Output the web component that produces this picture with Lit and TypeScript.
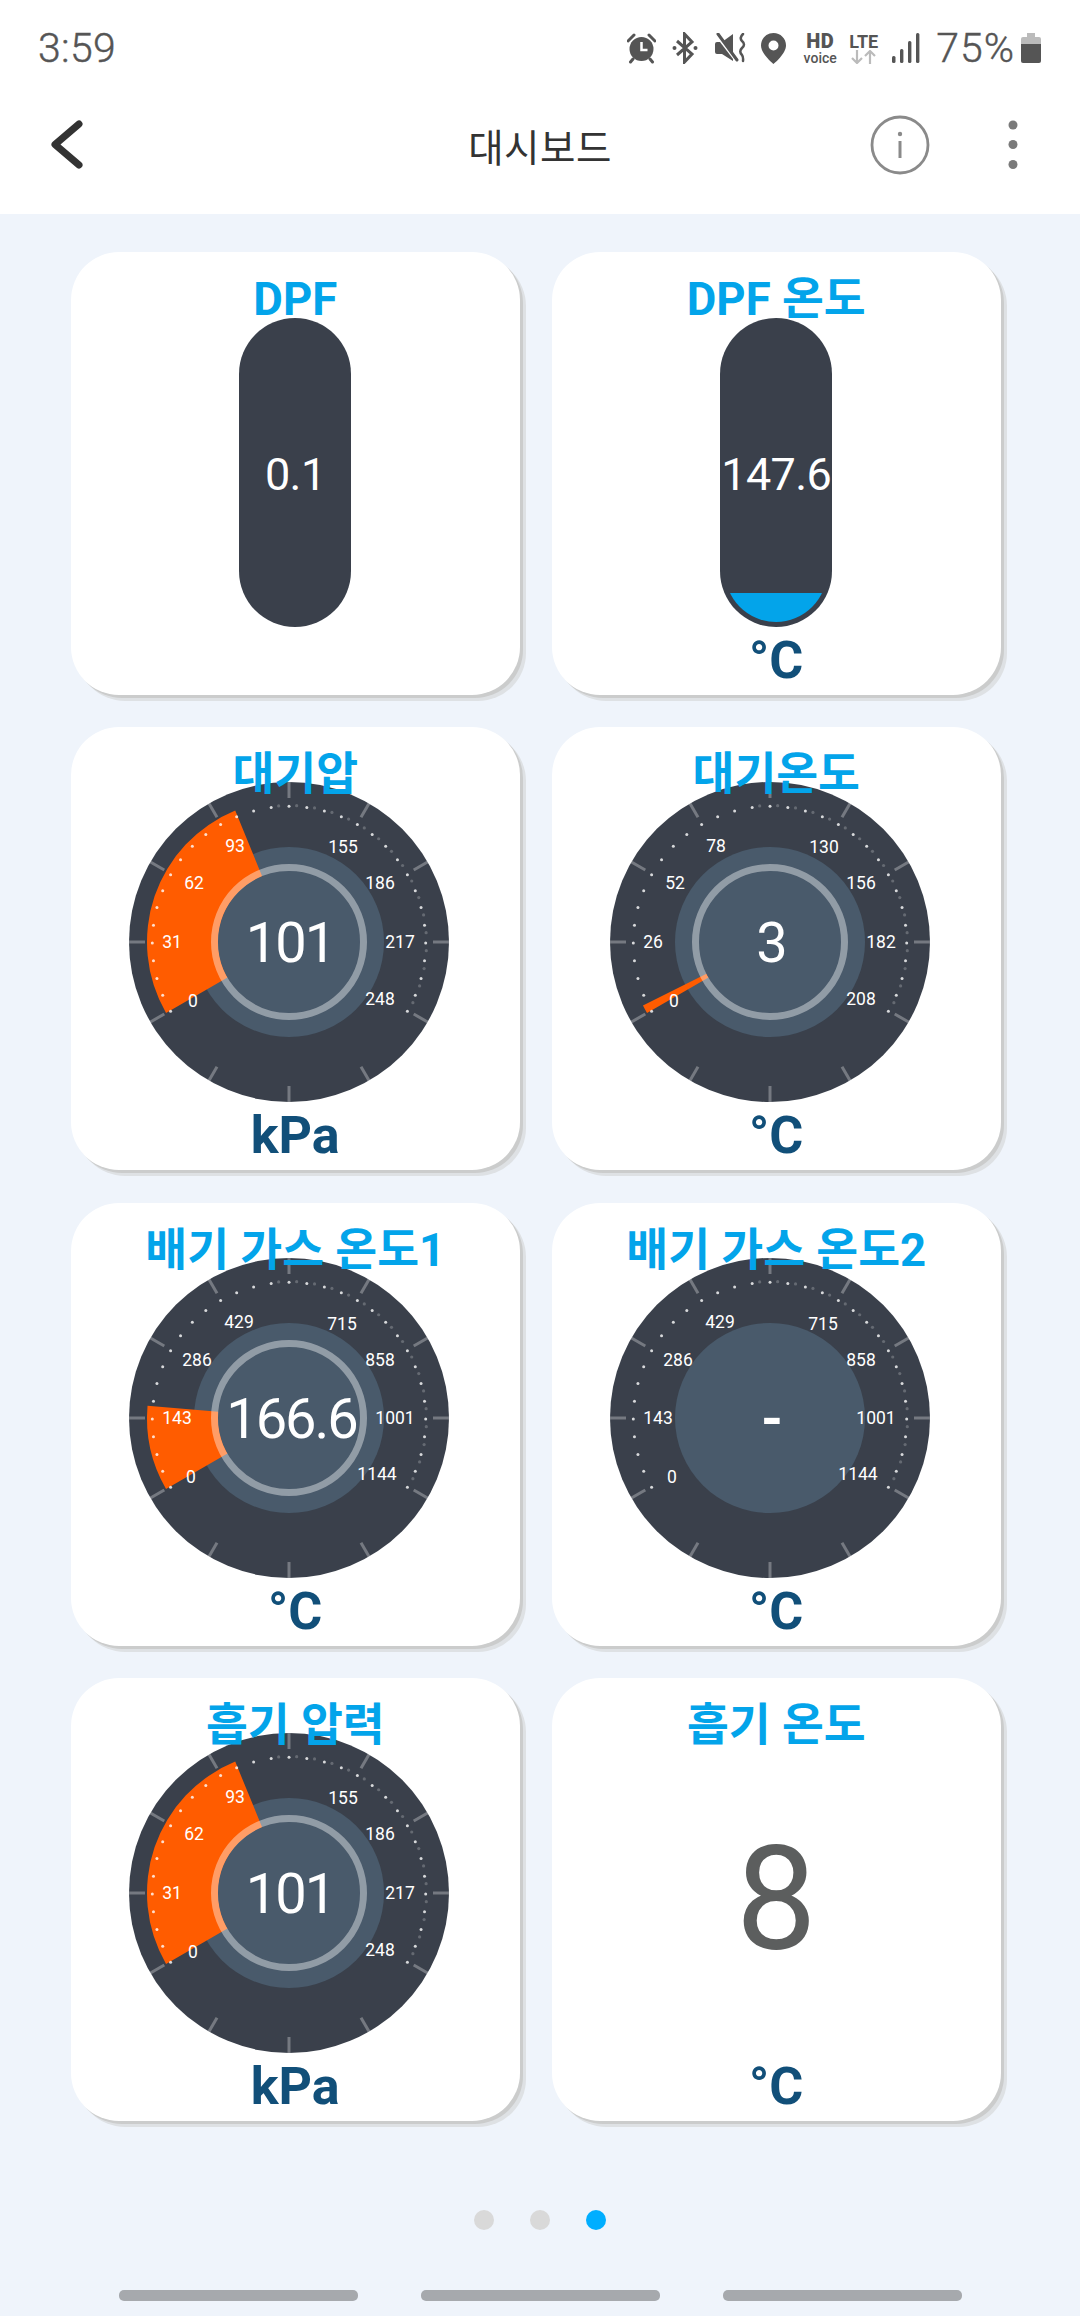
import { LitElement, html, svg, css } from "lit";
import { customElement } from "lit/decorators.js";

interface GaugeCfg {
  title: string;
  unit: string;
  max: number;
  value: number | null;
  display: string;
  labels: string[];
  offsets: number[][];
}

const BASE_OFFSETS = [[-96, 59], [-117, 0], [-95, -59], [-54, -96], [54, -95], [91, -59], [111, 0], [91, 57]];
const EXHAUST_OFFSETS = [[-98, 59], [-112, 0], [-92, -58], [-50, -96], [53, -94], [91, -58], [106, 0], [88, 56]];
const CX = 160;
const CY = 160;

const polar = (r: number, deg: number): [number, number] => {
  const a = (deg * Math.PI) / 180;
  return [CX + r * Math.cos(a), CY - r * Math.sin(a)];
};

const sector = (r0: number, r1: number, from: number, to: number) => {
  const [ax, ay] = polar(r1, from);
  const [bx, by] = polar(r1, to);
  const [cx, cy] = polar(r0, to);
  const [dx, dy] = polar(r0, from);
  const large = from - to > 180 ? 1 : 0;
  return `M${ax} ${ay}A${r1} ${r1} 0 ${large} 1 ${bx} ${by}L${cx} ${cy}A${r0} ${r0} 0 ${large} 0 ${dx} ${dy}Z`;
};

const gauges: Record<string, GaugeCfg> = {
  atm: { title: "대기압", unit: "kPa", max: 248, value: 101, display: "101", labels: ["0", "31", "62", "93", "155", "186", "217", "248"], offsets: BASE_OFFSETS },
  air: { title: "대기온도", unit: "°C", max: 208, value: 3, display: "3", labels: ["0", "26", "52", "78", "130", "156", "182", "208"], offsets: BASE_OFFSETS },
  ex1: { title: "배기 가스 온도1", unit: "°C", max: 1144, value: 166.6, display: "166.6", labels: ["0", "143", "286", "429", "715", "858", "1001", "1144"], offsets: EXHAUST_OFFSETS },
  ex2: { title: "배기 가스 온도2", unit: "°C", max: 1144, value: null, display: "-", labels: ["0", "143", "286", "429", "715", "858", "1001", "1144"], offsets: EXHAUST_OFFSETS },
  intake: { title: "흡기 압력", unit: "kPa", max: 248, value: 101, display: "101", labels: ["0", "31", "62", "93", "155", "186", "217", "248"], offsets: BASE_OFFSETS },
};

@customElement("app-root")
export class AppRoot extends LitElement {
  static styles = css`
    :host {
      display: block;
      width: 1080px;
      height: 2316px;
      background: #eff4fb;
      font-family: Roboto, "Noto Sans CJK KR", sans-serif;
      overflow: hidden;
    }
    .top {
      background: #fff;
      height: 214px;
    }
    .status {
      height: 96px;
      display: flex;
      align-items: center;
      padding: 0 39px 0 38px;
      color: #555;
    }
    .time {
      font-size: 41px;
      font-weight: 300;
      margin-right: auto;
      letter-spacing: 0.3px;
      -webkit-text-stroke: 0.4px #555;
    }
    .ico { display: block; flex: none; }
    .m16 { margin-left: 16px; }
    .m17 { margin-left: 17px; }
    .m15 { margin-left: 15px; }
    .m13 { margin-left: 13px; }
    .m6 { margin-left: 6px; }
    .hd {
      width: 34px;
      margin-left: 17px;
      display: flex;
      flex-direction: column;
      align-items: center;
      gap: 2px;
      font-weight: 700;
      color: #555;
    }
    .hd b { font-size: 20px; line-height: 17px; height: 17px; letter-spacing: 0.5px; }
    .hd i { font-size: 14px; line-height: 12px; height: 12px; font-style: normal; font-weight: 500; }
    .lte {
      width: 31px;
      margin-left: 11px;
      display: flex;
      flex-direction: column;
      align-items: center;
    }
    .lte b { font-size: 18px; line-height: 17px; font-weight: 700; color: #555; }
    .pct {
      margin-left: 16px;
      font-size: 41px;
      font-weight: 300;
      letter-spacing: 1px;
      -webkit-text-stroke: 0.4px #555;
    }
    .appbar {
      height: 98px;
      display: grid;
      grid-template-columns: 1fr auto 1fr;
      align-items: center;
    }
    .back { padding-left: 48px; }
    .page-title {
      font-size: 38.5px;
      color: #333;
      font-weight: 400;
      letter-spacing: 0.5px;
    }
    .actions {
      display: flex;
      justify-content: flex-end;
      align-items: center;
      padding-right: 62px;
      gap: 78px;
    }
    .grid {
      display: grid;
      grid-template-columns: 448.5px 448.5px;
      grid-auto-rows: 443px;
      column-gap: 32.5px;
      row-gap: 32.3px;
      padding: 38px 0 0 71px;
    }
    .card {
      background: #fff;
      border-radius: 48px;
      box-shadow: 3px 3px 0 #cbcccc, 6px 6px 0 #dee1e4;
      display: flex;
      flex-direction: column;
      align-items: center;
      padding-top: 20px;
      box-sizing: border-box;
    }
    .title {
      position: relative;
      z-index: 1;
      font-size: 45.5px;
      line-height: 56px;
      font-weight: 700;
      color: #03a4ea;
      white-space: nowrap;
    }
    .unit {
      margin-top: 3px;
      font-size: 52px;
      line-height: 61px;
      font-weight: 700;
      color: #114f79;
    }
    .gauge {
      display: block;
      margin: -21px 12px 0 0;
      flex: none;
    }
    .lbl {
      fill: #fff;
      font-size: 17.5px;
      text-anchor: middle;
    }
    .val {
      fill: #fff;
      font-size: 56px;
      text-anchor: middle;
      letter-spacing: -2px;
    }
    .val.none { font-weight: 700; }
    .capsule {
      margin-top: -10px;
      width: 112px;
      height: 309px;
      border-radius: 56px;
      background: #3a404b;
      position: relative;
      flex: none;
      display: flex;
      align-items: center;
      justify-content: center;
      padding-top: 3px;
      box-sizing: border-box;
    }
    .tube {
      position: absolute;
      inset: 5px;
      border-radius: 51px;
      overflow: hidden;
      display: flex;
      flex-direction: column;
      justify-content: flex-end;
    }
    .fill { background: #03a4ea; }
    .cap-val {
      position: relative;
      font-size: 45px;
      font-weight: 400;
      letter-spacing: -0.6px;
      color: #fff;
      white-space: nowrap;
    }
    .big {
      height: 299px;
      padding-bottom: 6px;
      box-sizing: border-box;
      display: flex;
      align-items: center;
      font-size: 144px;
      font-weight: 400;
      color: #5c5e5e;
      line-height: 1;
    }
    .pager {
      display: flex;
      justify-content: center;
      gap: 36px;
      margin-top: 89px;
    }
    .dot { width: 20px; height: 20px; border-radius: 50%; background: #d9d9d9; }
    .dot.on { background: #00aeff; }
    .nav {
      display: flex;
      justify-content: center;
      gap: 63px;
      margin-top: 60px;
    }
    .nav span { width: 239px; height: 11px; border-radius: 5px; background: #a6a9ad; }
  `;

  private statusBar() {
    return html`<div class="status">
      <span class="time">3:59</span>
      <svg class="ico" width="29" height="31" viewBox="0 0 29 31">
        <path d="M1 8 7 2M28 8l-6-6" stroke="#555" stroke-width="3" stroke-linecap="round" fill="none"/>
        <path d="M6 26l-2.500 3M23 26l2.500 3" stroke="#555" stroke-width="3" stroke-linecap="round" fill="none"/>
        <circle cx="14.500" cy="16" r="12" fill="#555"/>
        <path d="M14.500 9v8h6" stroke="#fff" stroke-width="2.500" fill="none"/>
      </svg>
      <svg class="ico m16" width="26" height="32" viewBox="0 0 26 32">
        <path d="M5 9 20 22l-7.500 8V2L20 10 5 23" stroke="#555" stroke-width="3" fill="none"/>
        <circle cx="2.500" cy="16" r="2" fill="#555"/>
        <circle cx="23.500" cy="16" r="2" fill="#555"/>
      </svg>
      <svg class="ico m17" width="31" height="30" viewBox="0 0 31 30">
        <path d="M0 11q0-2 2-2h5l11-8v27L7 21H2q-2 0-2-2z" fill="#555"/>
        <path d="M0 0 23 30" stroke="#fff" stroke-width="3"/>
        <path d="M3 1 22 27" stroke="#555" stroke-width="3" stroke-linecap="round"/>
        <path d="M28 1q-4 4-1 7 4 3.500 0 7-3.500 3.500 0 7 1.500 2 1 6" stroke="#555" stroke-width="2.500" fill="none" stroke-linecap="round"/>
      </svg>
      <svg class="ico m15" width="25" height="31" viewBox="0 0 25 31">
        <path fill-rule="evenodd" d="M12.500 0C5.500 0 0 5.500 0 12.500 0 21 12.500 31 12.500 31S25 21 25 12.500C25 5.500 19.500 0 12.500 0Zm0 7.500a5 5 0 1 1 0 10 5 5 0 0 1 0-10Z" fill="#555"/>
      </svg>
      <div class="hd"><b>HD</b><i>voice</i></div>
      <div class="lte">
        <b>LTE</b>
        <svg class="ico" width="31" height="14" viewBox="0 0 31 14">
          <path d="M9 0v13M4 8l5 5 5-5M22 14V1M17 6l5-5 5 5" stroke="#bbb" stroke-width="2.200" fill="none"/>
        </svg>
      </div>
      <svg class="ico m13" width="28" height="30" viewBox="0 0 28 30">
        <rect x="0" y="23" width="3.500" height="7" rx="1.500" fill="#555"/>
        <rect x="8" y="16" width="3.400" height="14" rx="1.500" fill="#555"/>
        <rect x="16" y="8" width="3.400" height="22" rx="1.500" fill="#555"/>
        <rect x="24" y="0" width="3.400" height="30" rx="1.500" fill="#555"/>
      </svg>
      <span class="pct">75%</span>
      <svg class="ico m6" width="20" height="30" viewBox="0 0 20 30">
        <path d="M6 0h8v4h4q2 0 2 2v6H0V6q0-2 2-2h4z" fill="#bbb"/>
        <path d="M0 11h20v17q0 2-2 2H2q-2 0-2-2z" fill="#555"/>
      </svg>
    </div>`;
  }

  private appBar() {
    return html`<div class="appbar">
      <div class="back">
        <svg class="ico" width="36" height="50" viewBox="0 0 36 50">
          <path d="M31 4 7 24.500 31 45" stroke="#333" stroke-width="7" fill="none" stroke-linecap="round" stroke-linejoin="round"/>
        </svg>
      </div>
      <div class="page-title">대시보드</div>
      <div class="actions">
        <svg class="ico" width="60" height="60" viewBox="0 0 60 60">
          <circle cx="30" cy="30" r="28" fill="none" stroke="#8a8a8a" stroke-width="2.800"/>
          <circle cx="30" cy="19" r="2.200" fill="#8a8a8a"/>
          <path d="M30 26v17" stroke="#8a8a8a" stroke-width="3"/>
        </svg>
        <svg class="ico" width="10" height="50" viewBox="0 0 10 50">
          <circle cx="5" cy="5" r="4.500" fill="#7a7a7a"/>
          <circle cx="5" cy="24.500" r="4.500" fill="#7a7a7a"/>
          <circle cx="5" cy="44.500" r="4.500" fill="#7a7a7a"/>
        </svg>
      </div>
    </div>`;
  }

  private gauge(g: GaugeCfg) {
    const ticks = Array.from({ length: 12 }, (_, i) => i * 30);
    const dots = Array.from({ length: 33 }, (_, i) => 210 - i * 7.5);
    const end = g.value === null ? 210 : 210 - (240 * g.value) / g.max;
    const valX = g.display.length > 3 ? 162.5 : 161;
    return html`<svg class="gauge" width="320" height="320" viewBox="0 0 320 320">
      <circle cx="160" cy="160" r="160" fill="#3a404b"/>
      ${ticks.map((d) => {
        const [x1, y1] = polar(144, d);
        const [x2, y2] = polar(160, d);
        return svg`<line x1=${x1} y1=${y1} x2=${x2} y2=${y2} stroke="#fff" stroke-opacity="0.3" stroke-width="3"/>`;
      })}
      <circle cx="160" cy="160" r="95" fill="#495a6b"/>
      ${g.value !== null
        ? svg`<path d=${sector(71, 142, 210, end)} fill="#ff5c00"/>
              <circle cx="160" cy="160" r="71" fill="#495a6b"/>
              <circle cx="160" cy="160" r="74.500" fill="none" stroke="#fff" stroke-opacity="0.4" stroke-width="7"/>`
        : ""}
      ${dots.map((d) => {
        const [x, y] = polar(136.7, d);
        const [fx, fy] = polar(137.5, d - 3.2);
        const faint = d < 100 && d > -28;
        return svg`<circle cx=${x} cy=${y + 1} r="1.500" fill="#fff" fill-opacity="0.8"/>
          ${faint ? svg`<circle cx=${fx} cy=${fy + 1} r="1.600" fill="#fff" fill-opacity="0.22"/>` : ""}`;
      })}
      ${g.labels.map((t, i) => {
        const [dx, dy] = g.offsets[i];
        return svg`<text class="lbl" x=${160 + dx} y=${160 + dy + 6.2}>${t}</text>`;
      })}
      <text class="val ${g.value === null ? "none" : ""}" x=${valX} y="180">${g.display}</text>
    </svg>`;
  }

  private gaugeCard(g: GaugeCfg) {
    return html`<div class="card">
      <div class="title">${g.title}</div>
      ${this.gauge(g)}
      <div class="unit">${g.unit}</div>
    </div>`;
  }

  private capsuleCard(title: string, value: string, fillPx: number, unit: string) {
    return html`<div class="card">
      <div class="title">${title}</div>
      <div class="capsule">
        <div class="tube">
          ${fillPx > 0 ? html`<div class="fill" style="height:${fillPx}px"></div>` : ""}
        </div>
        <div class="cap-val">${value}</div>
      </div>
      ${unit ? html`<div class="unit">${unit}</div>` : ""}
    </div>`;
  }

  render() {
    return html`
      <div class="top">${this.statusBar()}${this.appBar()}</div>
      <div class="grid">
        ${this.capsuleCard("DPF", "0.1", 0, "")}
        ${this.capsuleCard("DPF 온도", "147.6", 29, "°C")}
        ${this.gaugeCard(gauges.atm)}
        ${this.gaugeCard(gauges.air)}
        ${this.gaugeCard(gauges.ex1)}
        ${this.gaugeCard(gauges.ex2)}
        ${this.gaugeCard(gauges.intake)}
        <div class="card">
          <div class="title">흡기 온도</div>
          <div class="big">8</div>
          <div class="unit">°C</div>
        </div>
      </div>
      <div class="pager"><span class="dot"></span><span class="dot"></span><span class="dot on"></span></div>
      <div class="nav"><span></span><span></span><span></span></div>
    `;
  }
}
